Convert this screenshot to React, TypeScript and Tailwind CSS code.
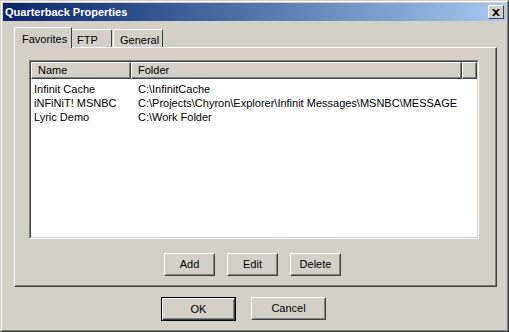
import React from "react";

const font = { fontFamily: '"Liberation Sans", Arial, sans-serif' };

function Button({ label, width, isDefault }: { label: string; width: string; isDefault?: boolean }) {
    const inner = (
        <div className="h-full border border-t-white border-l-white border-r-[#404040] border-b-[#404040]">
            <div className="h-full flex items-center justify-center border border-t-[#d4d0c8] border-l-[#d4d0c8] border-r-[#808080] border-b-[#808080] text-[11px] text-black">
                {label}
            </div>
        </div>
    );
    if (isDefault) {
        return <div className={`${width} h-[24px] border border-black`}>{inner}</div>;
    }
    return <div className={`${width} h-[23px]`}>{inner}</div>;
}

function HeaderCell({ label, width }: { label: string; width: string }) {
    return (
        <div className={`${width} h-full border border-t-white border-l-white border-r-[#404040] border-b-[#404040]`}>
            <div className="h-full flex items-center pl-[6px] border-r border-b border-r-[#808080] border-b-[#808080] text-[11px]">
                {label}
            </div>
        </div>
    );
}

const rows = [
    { name: "Infinit Cache", folder: "C:\\InfinitCache" },
    { name: "iNFiNiT! MSNBC", folder: "C:\\Projects\\Chyron\\Explorer\\Infinit Messages\\MSNBC\\MESSAGE" },
    { name: "Lyric Demo", folder: "C:\\Work Folder" },
];

export default function App() {
    return (
        <div style={font} className="w-[509px] h-[332px] bg-[#d4d0c8] border border-t-[#d4d0c8] border-l-[#d4d0c8] border-r-[#404040] border-b-[#404040]">
            <div className="h-full border border-t-white border-l-white border-r-[#808080] border-b-[#808080] p-[1px] flex flex-col">
                {/* title bar */}
                <div className="h-[18px] flex items-center justify-between bg-gradient-to-r from-[#0a246a] to-[#a6caf0] pl-[2px] pr-[2px]">
                    <span className="text-white font-bold text-[11px]">Quarterback Properties</span>
                    <div className="w-[16px] h-[14px] border border-t-white border-l-white border-r-[#404040] border-b-[#404040] bg-[#d4d0c8] flex items-center justify-center">
                        <svg width="8" height="7" viewBox="0 0 8 7">
                            <path d="M0 0h2l2 2 2-2h2L5 3.5 8 7H6L4 5 2 7H0l3-3.5z" fill="black" />
                        </svg>
                    </div>
                </div>

                {/* tabs */}
                <div className="ml-[11px] mt-[6px] flex items-end h-[20px] relative z-10">
                    <div className="w-[58px] h-[21px] -mb-[1px] bg-[#d4d0c8] border-l border-t border-l-white border-t-white rounded-tl-[2px] border-r border-r-[#404040] pl-[7px] pt-[3px] text-[11px]">
                        Favorites
                    </div>
                    <div className="w-[40px] h-[18px] border-t border-t-white border-r border-r-[#404040] rounded-tr-[2px] pl-[5px] pt-[2px] text-[11px]">
                        FTP
                    </div>
                    <div className="w-[50px] h-[18px] ml-[1px] border-l border-t border-l-white border-t-white rounded-tl-[2px] border-r border-r-[#404040] rounded-tr-[2px] pl-[6px] pt-[2px] text-[11px]">
                        General
                    </div>
                </div>

                {/* tab panel */}
                <div className="ml-[11px] w-[483px] h-[240px] border border-t-white border-l-white border-r-[#404040] border-b-[#404040]">
                    <div className="h-full border-r border-b border-r-[#808080] border-b-[#808080] pt-[12px] pl-[14px] flex flex-col">
                        {/* list view */}
                        <div className="w-[450px] h-[179px] border border-t-[#808080] border-l-[#808080] border-r-white border-b-white">
                            <div className="h-full border border-t-[#404040] border-l-[#404040] border-r-[#d4d0c8] border-b-[#d4d0c8] bg-white flex flex-col">
                                <div className="h-[17px] flex bg-[#d4d0c8]">
                                    <HeaderCell label="Name" width="w-[100px]" />
                                    <HeaderCell label="Folder" width="w-[331px]" />
                                    <HeaderCell label="" width="flex-1" />
                                </div>
                                <div className="pt-[3px] text-[11px]">
                                    {rows.map((r) => (
                                        <div key={r.name} className="h-[14px] flex items-center whitespace-nowrap">
                                            <div className="w-[100px] pl-[3px]">{r.name}</div>
                                            <div className="pl-[7px]">{r.folder}</div>
                                        </div>
                                    ))}
                                </div>
                            </div>
                        </div>

                        <div className="flex gap-[12px] ml-[135px] mt-[14px]">
                            <Button label="Add" width="w-[51px]" />
                            <Button label="Edit" width="w-[51px]" />
                            <Button label="Delete" width="w-[51px]" />
                        </div>
                    </div>
                </div>

                {/* bottom buttons */}
                <div className="flex gap-[15px] ml-[158px] mt-[10px]">
                    <Button label="OK" width="w-[75px]" isDefault />
                    <Button label="Cancel" width="w-[75px]" />
                </div>
            </div>
        </div>
    );
}
